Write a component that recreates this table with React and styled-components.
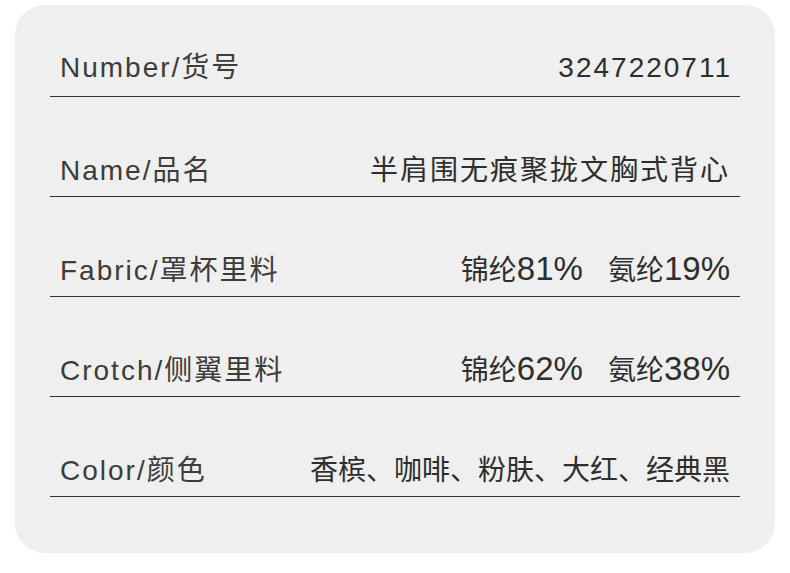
import React from 'react';
import styled, { createGlobalStyle } from 'styled-components';

const GlobalStyle = createGlobalStyle`
  html, body {
    margin: 0;
    padding: 0;
    background: #ffffff;
  }
  body {
    font-family: "Liberation Sans", "Noto Sans CJK SC", sans-serif;
  }
`;

const Card = styled.div`
  box-sizing: border-box;
  width: 760px;
  height: 548px;
  margin: 5px 0 0 15px;
  padding: 0 35px;
  background: #efefef;
  border-radius: 30px;
`;

const Row = styled.div`
  box-sizing: border-box;
  display: flex;
  justify-content: space-between;
  align-items: flex-end;
  height: 100px;
  padding: 0 10px 8px 10px;
  border-bottom: 1px solid #333333;

  &:first-child {
    height: 92px;
    padding-bottom: 11px;
  }
`;

const Label = styled.span`
  font-size: 28px;
  line-height: 34px;
  letter-spacing: 2px;
  color: #3c3c3c;
  white-space: nowrap;
`;

const Value = styled.span`
  font-size: 28px;
  line-height: 34px;
  letter-spacing: 2px;
  margin-right: ${(p) => p.$nudge || 0}px;
  color: #2e2e2e;
  white-space: nowrap;
`;

const Han = styled.span`
  letter-spacing: ${(p) => p.$spacing}px;
`;

const Percent = styled.span`
  font-size: 33px;
  line-height: 1;
  letter-spacing: 0;
`;

const Gap = styled.span`
  display: inline-block;
  width: 25px;
`;

const Blend = ({ parts }) =>
  parts.map(([han, num], i) => (
    <React.Fragment key={i}>
      {i > 0 && <Gap />}
      <Han $spacing={0}>{han}</Han>
      <Percent>{num}</Percent>
    </React.Fragment>
  ));

export default function App() {
  return (
    <>
      <GlobalStyle />
      <Card>
        <Row>
          <Label>Number/货号</Label>
          <Value $nudge={-2}>3247220711</Value>
        </Row>
        <Row>
          <Label>Name/品名</Label>
          <Value>
            <Han $spacing={2}>半肩围无痕聚拢文胸式背心</Han>
          </Value>
        </Row>
        <Row>
          <Label>Fabric/罩杯里料</Label>
          <Value>
            <Blend parts={[['锦纶', '81%'], ['氨纶', '19%']]} />
          </Value>
        </Row>
        <Row>
          <Label>Crotch/侧翼里料</Label>
          <Value>
            <Blend parts={[['锦纶', '62%'], ['氨纶', '38%']]} />
          </Value>
        </Row>
        <Row>
          <Label>Color/颜色</Label>
          <Value>
            <Han $spacing={0}>香槟、咖啡、粉肤、大红、经典黑</Han>
          </Value>
        </Row>
      </Card>
    </>
  );
}
